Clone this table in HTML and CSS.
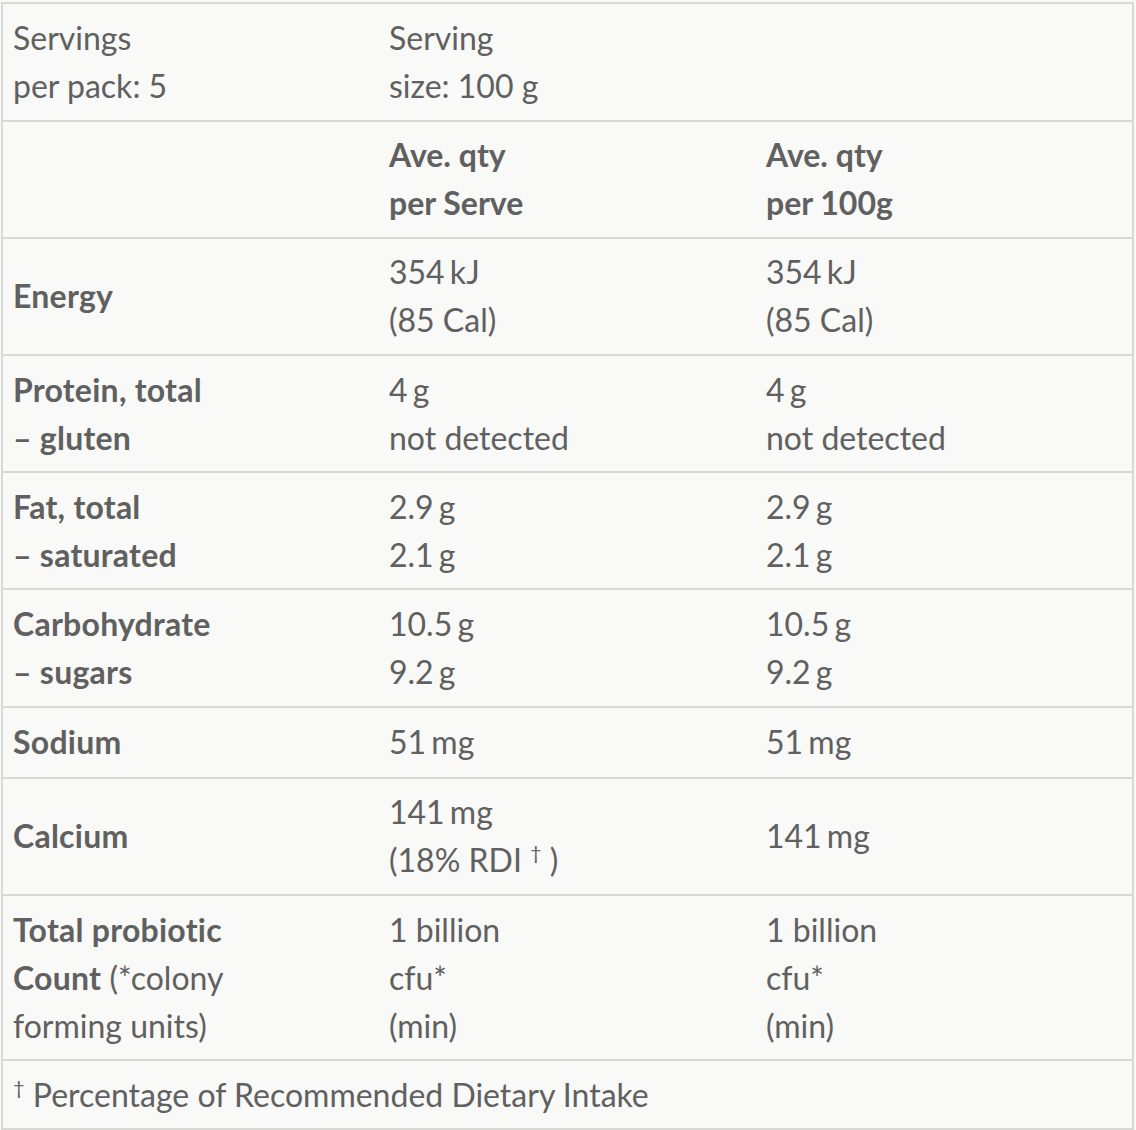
FILE: index.html
```html
<!DOCTYPE html>
<html>
<head>
<meta charset="utf-8">
<link rel="stylesheet" href="styles.css">
</head>
<body>
<div class="wrap">
<table class="nutrition">
  <colgroup><col class="c"><col class="c"><col class="c"></colgroup>
  <tbody>
    <tr class="first">
      <td>Servings<br>per pack: 5</td>
      <td>Serving<br>size: 100 g</td>
      <td></td>
    </tr>
    <tr>
      <td></td>
      <td class="b">Ave. qty<br>per Serve</td>
      <td class="b">Ave. qty<br>per 100g</td>
    </tr>
    <tr>
      <td class="b lbl">Energy</td>
      <td><span class="q">354 kJ</span><br>(85 Cal)</td>
      <td><span class="q">354 kJ</span><br>(85 Cal)</td>
    </tr>
    <tr>
      <td class="b lbl">Protein, total<br>– gluten</td>
      <td><span class="q">4 g</span><br>not detected</td>
      <td><span class="q">4 g</span><br>not detected</td>
    </tr>
    <tr>
      <td class="b lbl">Fat, total<br>– saturated</td>
      <td><span class="q">2.9 g</span><br><span class="q">2.1 g</span></td>
      <td><span class="q">2.9 g</span><br><span class="q">2.1 g</span></td>
    </tr>
    <tr>
      <td class="b lbl">Carbohydrate<br>– sugars</td>
      <td><span class="q">10.5 g</span><br><span class="q">9.2 g</span></td>
      <td><span class="q">10.5 g</span><br><span class="q">9.2 g</span></td>
    </tr>
    <tr class="single">
      <td class="b lbl">Sodium</td>
      <td><span class="q">51 mg</span></td>
      <td><span class="q">51 mg</span></td>
    </tr>
    <tr>
      <td class="b lbl">Calcium</td>
      <td><span class="q">141 mg</span><br>(18% RDI <sup>†</sup> )</td>
      <td><span class="q">141 mg</span></td>
    </tr>
    <tr>
      <td><span class="b lbl">Total probiotic<br>Count</span> (*colony<br>forming units)</td>
      <td>1 billion<br>cfu*<br>(min)</td>
      <td>1 billion<br>cfu*<br>(min)</td>
    </tr>
    <tr>
      <td colspan="3" class="foot"><sup>†</sup> Percentage of Recommended Dietary Intake</td>
    </tr>
  </tbody>
</table>
</div>
</body>
</html>
```
FILE: styles.css
```css
html, body {
  margin: 0;
  padding: 0;
  background: #f9f9f7;
}
.wrap {
  padding: 2px 2px 0 1px;
}
.nutrition {
  width: 1133px;
  border-collapse: collapse;
  table-layout: fixed;
  border: 2px solid #d8d8d6;
  background: #f9f9f7;
  font-family: Lato, "Open Sans", sans-serif;
  font-size: 32px;
  line-height: 48px;
  color: #606060;
}
.nutrition td {
  border-top: 2px solid #d8d8d6;
  border-bottom: 2px solid #d8d8d6;
  padding: 9.6px 10px 9.6px 10px;
  vertical-align: middle;
  text-align: left;
}
.nutrition .first td {
  padding-top: 9.8px;
  padding-bottom: 9.8px;
}
.nutrition .single td {
  padding-top: 10.6px;
  padding-bottom: 10.6px;
}
.b {
  font-weight: 700;
}
.lbl {
  letter-spacing: 0.25px;
}
.q {
  word-spacing: -3px;
}
sup {
  font-size: 20px;
  line-height: 0;
  vertical-align: 12px;
}
```
